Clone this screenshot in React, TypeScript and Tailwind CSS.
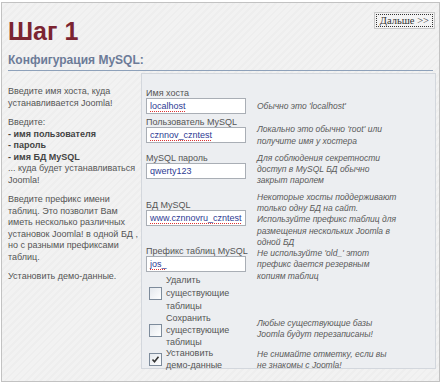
export default function App() {
  const sans = "font-['Liberation_Sans',Arial,sans-serif]";
  const inputCls =
    "w-[100px] h-[16px] bg-white border border-[#a9aeb5] px-[3px] text-[9px] leading-[14px] text-[#2d3a94] flex items-center";
  const under = "underline decoration-dotted decoration-[#d33] underline-offset-2";
  const help = "italic text-[8.5px] leading-[11.2px] text-[#5a5a5a]";
  const label = "text-[9px] leading-[10px] text-[#555]";
  const Check = ({ checked }: { checked?: boolean }) => (
    <div className="w-[13px] h-[13px] border border-[#7d8b9b] bg-gradient-to-br from-[#e4e8ed] to-white flex items-center justify-center shrink-0">
      {checked && (
        <svg width="9" height="9" viewBox="0 0 9 9">
          <path d="M1.5 4.5 L3.5 6.8 L7.5 1.8" stroke="#333" strokeWidth="1.6" fill="none" />
        </svg>
      )}
    </div>
  );
  const Field = ({ name, value, u = true, cls = "" }: { name: string; value: string; u?: boolean; cls?: string }) => (
    <div className={`w-[111px] shrink-0 flex flex-col ${cls}`}>
      <div className={label}>{name}</div>
      <div className={inputCls}>{u ? <span className={under}>{value}</span> : value}</div>
    </div>
  );
  return (
    <div className={`w-[443px] h-[386px] bg-white pt-[2px] pl-[1px] ${sans}`}>
      <div className="w-[439px] h-[380px] border border-[#c2c2c2] bg-[repeating-linear-gradient(135deg,#f2f2f2_0px,#f2f2f2_3px,#eeeeee_3px,#eeeeee_5px)] flex flex-col">
        <div className="flex justify-between items-start pl-[6px] pr-[4px] pt-[9px]">
          <div className="text-[25px] leading-none font-bold text-[#7b2431] mt-[7px]">Шаг 1</div>
          <div className="border border-[#c9c9c9] bg-[#f3f3f3] p-[1px]">
            <div className="border border-dotted border-[#333] px-[3px] h-[13px] flex items-center font-['Liberation_Serif',serif] text-[10.5px] text-[#333]">
              Дальше &gt;&gt;
            </div>
          </div>
        </div>
        <div className="mx-[6px] mt-[9px] pb-[3px] border-b border-[#8ea1ba] text-[12px] leading-[14px] font-bold text-[#6c7b98]">
          Конфигурация MySQL:
        </div>
        <div className="flex mt-[2px] pl-[6px] pr-[3px]">
          <div className="w-[133px] pt-[13px] text-[9px] leading-[11.5px] text-[#555] flex flex-col gap-[8px]">
            <div>
              Введите имя хоста, куда
              <br />
              устанавливается Joomla!
            </div>
            <div>
              Введите:
              <br />
              <b className="text-[#444]">- имя пользователя</b>
              <br />
              <b className="text-[#444]">- пароль</b>
              <br />
              <b className="text-[#444]">- имя БД MySQL</b>
              <br />
              ... куда будет устанавливаться
              <br />
              Joomla!
            </div>
            <div>
              Введите префикс имени
              <br />
              таблиц. Это позволит Вам
              <br />
              иметь несколько различных
              <br />
              установок Joomla! в одной БД ,
              <br />
              но с разными префиксами
              <br />
              таблиц.
            </div>
            <div>Установить демо-данные.</div>
          </div>
          <div className="flex-1 h-[296px] border border-[#d3d7dd] bg-[#eceef1] px-[4px] pt-[12px] flex flex-col overflow-visible">
            <div className="h-[29px] shrink-0 flex items-center">
              <Field name="Имя хоста" value="localhost" />
              <div className={`${help} mt-[12px]`}>Обычно это 'localhost'</div>
            </div>

            <div className="h-[29px] shrink-0 flex items-center">
              <Field name="Пользователь MySQL" value="cznnov_czntest" />
              <div className={`${help} mt-[12px]`}>
                Локально это обычно 'root' или
                <br />
                получите имя у хостера
              </div>
            </div>

            <div className="h-[43px] shrink-0 flex items-center">
              <Field name="MySQL пароль" value="qwerty123" u={false} />
              <div className={`${help} mt-[8px]`}>
                Для соблюдения секретности
                <br />
                доступ в MySQL БД обычно
                <br />
                закрыт паролем
              </div>
            </div>

            <div className="h-[58px] shrink-0 flex items-center">
              <Field name="БД MySQL" value="www.cznnovru_czntest" cls="pb-[6px]" />
              <div className={`${help} pt-[8px]`}>
                Некоторые хосты поддерживают
                <br />
                только одну БД на сайт.
                <br />
                Используйте префикс таблиц для
                <br />
                размещения нескольких Joomla в
                <br />
                одной БД
              </div>
            </div>

            <div className="h-[28px] shrink-0 flex items-center">
              <Field name="Префикс таблиц MySQL" value="jos_" />
              <div className={`${help} mt-[12px]`}>
                Не используйте 'old_' этот
                <br />
                префикс дается резервным
                <br />
                копиям таблиц
              </div>
            </div>

            <div className="h-[41px] shrink-0 flex items-center">
              <div className="w-[111px] shrink-0 flex items-center gap-[4px] pl-[3px]">
                <Check />
                <div className="text-[9px] leading-[13px] text-[#555]">
                  Удалить
                  <br />
                  существующие
                  <br />
                  таблицы
                </div>
              </div>
            </div>

            <div className="h-[32px] shrink-0 flex items-center">
              <div className="w-[111px] shrink-0 flex items-center gap-[4px] pl-[3px]">
                <Check />
                <div className="text-[9px] leading-[12px] text-[#555]">
                  Сохранить
                  <br />
                  существующие
                  <br />
                  таблицы
                </div>
              </div>
              <div className={`${help} pb-[2px]`}>
                Любые существующие базы
                <br />
                Joomla будут перезаписаны!
              </div>
            </div>

            <div className="h-[26px] shrink-0 flex items-center">
              <div className="w-[111px] shrink-0 flex items-center gap-[4px] pl-[3px]">
                <Check checked />
                <div className="text-[9px] leading-[12px] text-[#555]">
                  Установить
                  <br />
                  демо-данные
                </div>
              </div>
              <div className={`${help} mt-[2px]`}>
                Не снимайте отметку, если вы
                <br />
                не знакомы с Joomla!
              </div>
            </div>
          </div>
        </div>
      </div>
    </div>
  );
}
